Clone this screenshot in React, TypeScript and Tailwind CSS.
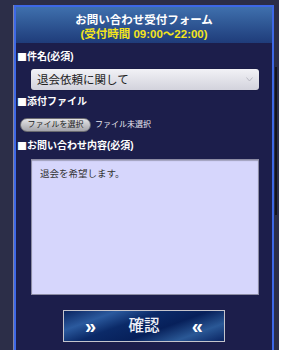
import React from "react";

const font = {
  fontFamily: '"Liberation Sans", "Noto Sans CJK JP", sans-serif',
};

const Label = ({ children }: { children: React.ReactNode }) => (
  <div className="flex h-[14px] items-center pl-[1px] text-[10px] font-bold leading-[14px] text-white">
    <span className="font-['Noto_Sans_CJK_JP',sans-serif]">■</span>
    <span>{children}</span>
  </div>
);

export default function App() {
  return (
    <div className="h-[350px] w-[288px] bg-white" style={font}>
      <div className="flex h-[350px] w-[279px] bg-[#2c2e48] pl-[13px] pt-[5px]">
        <div className="border-l border-[#8486a0]">
          <div className="flex h-full w-[260px] flex-col border-x-2 border-t-2 border-[#3d68e6] bg-[#1c1e4b]">
            <div className="h-[36px] bg-gradient-to-b from-[#3f70ad] to-[#1f3c7a] pt-[7px] text-center text-[11.5px] font-bold leading-[13.5px]">
              <div className="text-white">お問い合わせ受付フォーム</div>
              <div className="text-[#f3e41c]">(受付時間 09:00〜22:00)</div>
            </div>

            <div className="mt-[7px]">
              <Label>件名(必須)</Label>
            </div>

            <div className="ml-[15px] mt-[5px] flex h-[21px] w-[228px] items-center justify-between rounded-[3px] bg-gradient-to-b from-[#f2f2f6] to-[#d2d2dc] pl-[6px] pr-[6px] shadow-[0_0_1px_rgba(0,0,0,0.6)]">
              <span className="text-[11.5px] leading-[14px] text-[#222]">
                退会依頼に関して
              </span>
              <svg width="7" height="5" viewBox="0 0 7 5">
                <polyline
                  points="0.5,0.5 3.5,4 6.5,0.5"
                  fill="none"
                  stroke="#b4b4c0"
                  strokeWidth="0.9"
                />
              </svg>
            </div>

            <div className="mt-[5px]">
              <Label>添付ファイル</Label>
            </div>

            <div className="ml-[4px] mt-[9px] flex items-center gap-[4px]">
              <div className="flex h-[14px] w-[71px] items-center justify-center rounded-full border border-[#6a6a70] bg-gradient-to-b from-[#e4e4e6] to-[#a4a4aa] text-[8px] leading-[10px] text-[#222]">
                ファイルを選択
              </div>
              <span className="text-[8px] leading-[10px] text-[#e8e8f0]">
                ファイル未選択
              </span>
            </div>

            <div className="mt-[7px]">
              <Label>お問い合わせ内容(必須)</Label>
            </div>

            <div className="ml-[15px] mt-[6px] h-[136px] w-[228px] border border-[#8c8ca4] bg-[#d6d6fc] px-[8px] pt-[8px] text-[9.5px] leading-[12px] text-[#333] shadow-[inset_0_1px_1px_rgba(0,0,0,0.25)]">
              退会を希望します。
            </div>

            <div className="mx-auto mt-[15px] flex h-[32px] w-[162px] items-center justify-between border border-[#c4c4cc] bg-[linear-gradient(160deg,#0a2460_0%,#2b5a9e_22%,#0b2a68_40%,#07205a_60%,#2a5896_80%,#0a2462_100%)] px-[21px] text-white">
              <span className="text-[20px] font-bold leading-[20px]">»</span>
              <span className="text-[15.5px] font-medium leading-[18px] text-[#eef0f8]">
                確認
              </span>
              <span className="text-[20px] font-bold leading-[20px]">«</span>
            </div>
          </div>
        </div>
        <div className="w-[5px] pl-[1px] pt-[62px]">
          <div className="h-[148px] w-[2px] bg-[#14141e]" />
        </div>
      </div>
    </div>
  );
}
